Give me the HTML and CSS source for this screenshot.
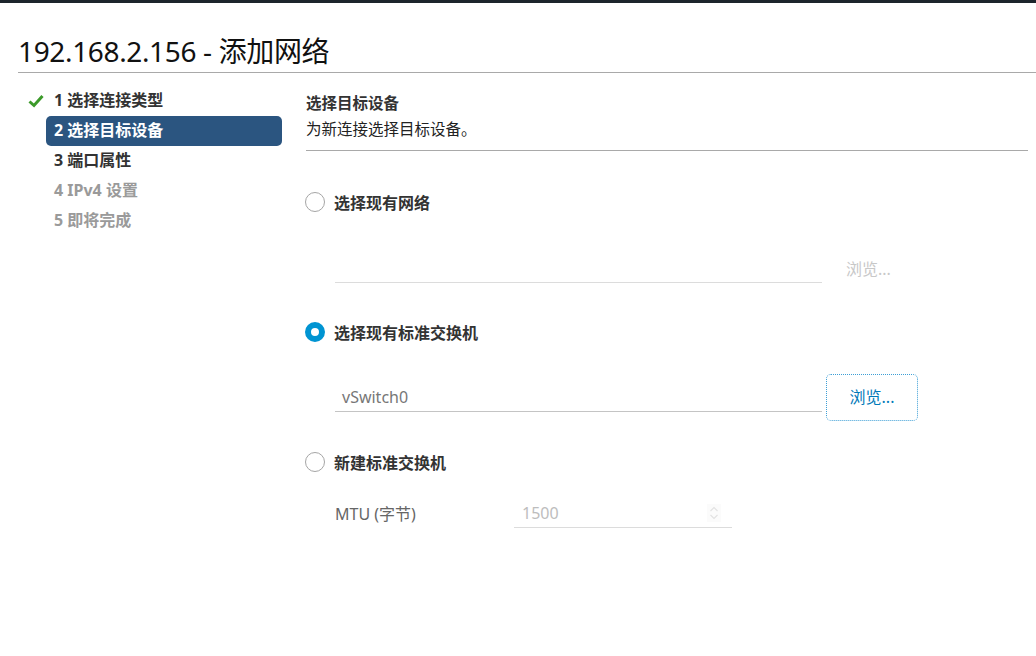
FILE: index.html
```html
<!DOCTYPE html>
<html lang="zh-CN">
<head>
<meta charset="utf-8">
<link rel="stylesheet" href="styles.css">
</head>
<body>
<div class="topbar"></div>
<div class="dialog">
  <h1 class="title">192.168.2.156 - 添加网络</h1>
  <div class="body">
    <nav class="steps">
      <div class="step done"><svg class="check" width="16" height="14" viewBox="0 0 16 14"><path d="M1.5 7.5 L6 11.5 L14.5 2" fill="none" stroke="#3c9a2a" stroke-width="3"/></svg>1 选择连接类型</div>
      <div class="step active">2 选择目标设备</div>
      <div class="step">3 端口属性</div>
      <div class="step disabled">4 IPv4 设置</div>
      <div class="step disabled">5 即将完成</div>
    </nav>
    <main class="content">
      <div class="head">
        <div class="head-title">选择目标设备</div>
        <div class="head-desc">为新连接选择目标设备。</div>
      </div>
      <div class="option opt1">
        <span class="radio"></span><span class="opt-label">选择现有网络</span>
      </div>
      <div class="field-row row1">
        <div class="input empty"></div>
        <div class="browse disabled">浏览...</div>
      </div>
      <div class="option opt2">
        <span class="radio checked"></span><span class="opt-label">选择现有标准交换机</span>
      </div>
      <div class="field-row row2">
        <div class="input value">vSwitch0</div>
        <div class="browse btn">浏览...</div>
      </div>
      <div class="option opt3">
        <span class="radio"></span><span class="opt-label">新建标准交换机</span>
      </div>
      <div class="mtu-row">
        <span class="mtu-label">MTU (字节)</span>
        <div class="mtu-input"><span>1500</span><svg class="spin" width="14" height="18" viewBox="0 0 14 18"><path d="M3.5 7 L7 3.5 L10.5 7 M3.5 11 L7 14.5 L10.5 11" fill="none" stroke="#e2e2e2" stroke-width="1.2"/></svg></div>
      </div>
    </main>
  </div>
</div>
</body>
</html>
```
FILE: styles.css
```css
* { box-sizing: border-box; }
html, body { margin: 0; padding: 0; background: #fff; }
body {
  font-family: "Noto Sans", "Noto Sans CJK SC", sans-serif;
  color: #333;
  width: 1036px;
  height: 656px;
  overflow: hidden;
}
.topbar { height: 3px; background: #1d252c; }
.dialog { padding: 0 0 0 18px; }
.title {
  margin: 0;
  padding-top: 30px;
  height: 70px;
  font-family: "Noto Sans", "Noto Sans CJK SC", sans-serif;
  font-weight: 400;
  font-size: 28px;
  line-height: 36px;
  color: #111;
  border-bottom: 1px solid #a9a9a9;
  letter-spacing: -0.35px;
}
.body { display: flex; }
.steps {
  width: 264px;
  padding-top: 13px;
  flex: none;
}
.step {
  height: 30px;
  line-height: 29px;
  font-family: "Noto Sans", "Noto Sans CJK SC", sans-serif;
  font-weight: 700;
  font-size: 16px;
  color: #333;
  padding-left: 36px;
  position: relative;
}
.step.done .check { position: absolute; left: 10px; top: 8px; }
.step.active {
  margin-left: 28px;
  padding-left: 8px;
  width: 236px;
  background: #2b5580;
  color: #fff;
  border-radius: 5px;
}
.step.disabled { color: #9a9a9a; }
.content { flex: 1; padding-left: 24px; padding-right: 8px; }
.head {
  padding-top: 19px;
  height: 78px;
  border-bottom: 1px solid #a9a9a9;
}
.head-title { font-weight: 700; font-size: 15.5px; line-height: 22px; color: #333; }
.head-desc { font-size: 15.5px; line-height: 30px; color: #222; }
.option {
  display: flex;
  align-items: center;
  height: 22px;
}
.opt1 { margin-top: 40px; }
.opt2 { margin-top: 38px; }
.opt3 { margin-top: 27px; }
.radio {
  width: 20px; height: 20px;
  border: 1px solid #a5a5a5;
  border-radius: 50%;
  margin-left: -1px;
  flex: none;
  background: #fff;
}
.radio.checked {
  border: 6px solid #0094d2;
  background: #fff;
}
.opt-label {
  margin-left: 9px;
  font-weight: 700;
  font-size: 16px;
  color: #333;
}
.field-row {
  display: flex;
  margin-left: 29px;
}
.row1 { margin-top: 20px; height: 50px; align-items: flex-end; }
.row2 { margin-top: 21px; height: 60px; align-items: flex-start; }
.input {
  width: 487px;
  height: 30px;
  border-bottom: 1px solid #dcdcdc;
  font-size: 16px;
  flex: none;
}
.input.value {
  border-bottom-color: #c4c4c4;
  color: #777;
  padding-left: 7px;
  line-height: 30px;
  margin-top: 18px;
}
.browse {
  font-size: 16px;
  margin-left: 4px;
}
.browse.disabled {
  color: #c8c8c8;
  padding-left: 20px;
  height: 30px;
  line-height: 32px;
}
.browse.btn {
  margin-top: 10px;
  width: 92px;
  height: 47px;
  border: 1px dotted #3d9fd6;
  border-radius: 5px;
  color: #0079b8;
  text-align: center;
  line-height: 44px;
}
.mtu-row {
  display: flex;
  align-items: center;
  margin-left: 29px;
  margin-top: 25px;
  height: 30px;
}
.mtu-label { width: 179px; font-size: 16px; color: #666; }
.mtu-input {
  width: 218px;
  height: 30px;
  border-bottom: 1px solid #dcdcdc;
  display: flex;
  align-items: center;
  justify-content: space-between;
  padding: 0 11px 0 8px;
  font-size: 16px;
  color: #bdbdbd;
}
.spin { background: #fbfbfb; }
```
